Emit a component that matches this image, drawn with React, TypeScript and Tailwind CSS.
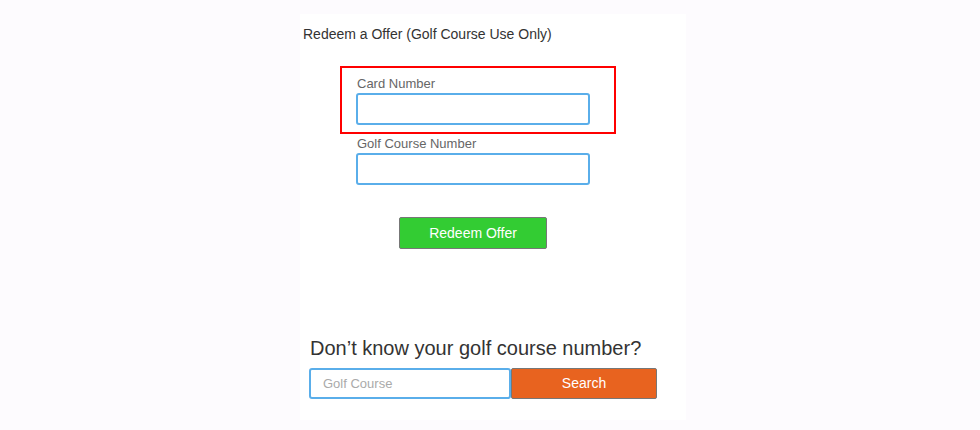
import React from 'react';

export default function App() {
    return (
        <div className="flex h-[430px] w-[980px] justify-center bg-[#fdfbfe] pl-[6px] font-['Liberation_Sans',Arial,sans-serif]">
            <div className="mt-[14px] flex h-[406px] w-[386px] flex-col bg-white">
                <h1 className="mt-[11px] ml-[3px] text-[14px] leading-[18px] text-[#333]">
                    Redeem a Offer (Golf Course Use Only)
                </h1>

                <div className="mt-[23px] ml-[40px] w-[276px] border-2 border-[#ff0000] pt-[8px] pr-[24px] pb-[7px] pl-[14px]">
                    <label className="block pl-[1px] text-[13px] leading-[15px] text-[#666]" htmlFor="card">
                        Card Number
                    </label>
                    <input
                        id="card"
                        type="text"
                        className="mt-[2px] block h-[32px] w-[234px] rounded-[3px] border-2 border-[#5aaeea] bg-white outline-none"
                    />
                </div>

                <div className="mt-[2px] ml-[56px]">
                    <label className="block pl-[1px] text-[13px] leading-[15px] text-[#666]" htmlFor="course">
                        Golf Course Number
                    </label>
                    <input
                        id="course"
                        type="text"
                        className="mt-[2px] block h-[32px] w-[234px] rounded-[3px] border-2 border-[#5aaeea] bg-white outline-none"
                    />
                </div>

                <button
                    type="button"
                    className="mt-[32px] ml-[99px] h-[32px] w-[148px] rounded-[2px] border border-[#777] bg-[#33cc33] text-[14px] text-white"
                >
                    Redeem Offer
                </button>

                <h2 className="mt-[87px] ml-[10px] text-[20px] leading-[24px] text-[#333]">
                    Don’t know your golf course number?
                </h2>
                <div className="mt-[8px] ml-[9px] flex">
                    <input
                        type="text"
                        placeholder="Golf Course"
                        className="h-[31px] w-[202px] rounded-[3px] border-2 border-[#5aaeea] bg-white px-[12px] text-[13px] text-[#333] outline-none placeholder:text-[#aaa]"
                    />
                    <button
                        type="button"
                        className="h-[31px] w-[146px] rounded-[2px] border border-[#777] bg-[#e8631f] text-[14px] text-white"
                    >
                        Search
                    </button>
                </div>
            </div>
        </div>
    );
}
